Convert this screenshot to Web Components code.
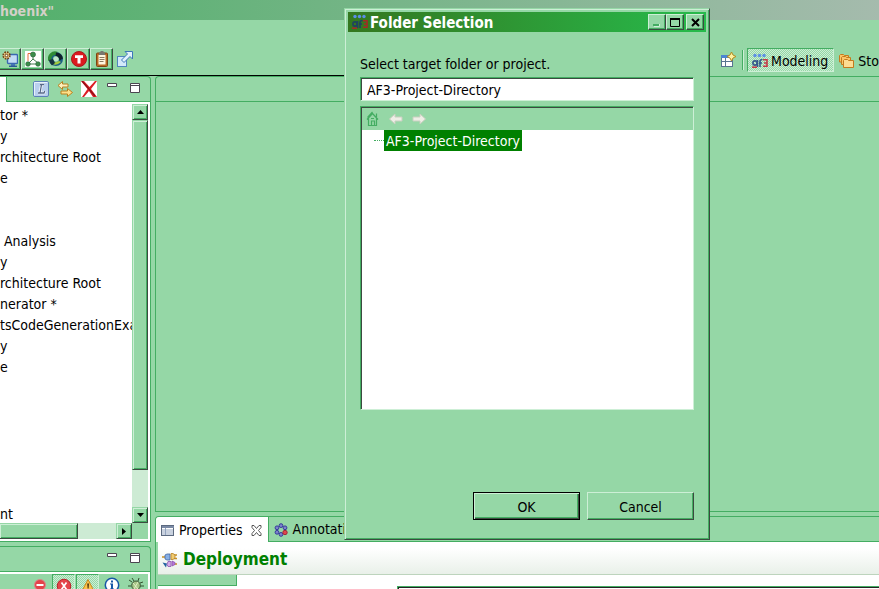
<!DOCTYPE html>
<html lang="en">
<head>
<meta charset="utf-8">
<title>AutoFOCUS 3 Phoenix</title>
<style>
html, body { margin: 0; height: 100%; }
body {
  --face: #95d7a6; --mid: #44ad62; --light: #cdefd6; --dark: #3c4a40; --track: #cdebd4;
  overflow: hidden; background: var(--face); color: #000;
  font: 14px/21px "DejaVu Sans Condensed", "DejaVu Sans", sans-serif;
}
</style>
</head>
<body>
<ide-workbench></ide-workbench>
<script>
const svg = (body, w = 16, h = 16) => `<svg width="${w}" height="${h}" viewBox="0 0 ${w} ${h}" aria-hidden="true">${body}</svg>`;
const people = (dark, red) => `<g fill="#5b8fe6"><circle cx="3" cy="2.5" r="1.7"/><circle cx="7.5" cy="2.5" r="1.7"/><circle cx="12" cy="2.5" r="1.7"/></g>
<g fill="none" stroke-width="1.6"><g stroke="${dark}"><circle cx="3" cy="10" r="2.1"/><path d="M5.500 7v7M8 14V8.500q0-2 2.500-2M7 10h3"/></g><path stroke="${red}" d="M11 6.800h4v6.500h-4M12 10h3"/><path stroke="${red}" d="M0 14.200h5"/></g>`;
const ICONS = {
  deploy: svg(`<rect x="5.500" y="3.500" width="10" height="9" rx="1" fill="#c3dcf5" stroke="#3a68b0" stroke-width="1.400"/><path d="M9 13h4v2H9z" fill="#4777b5"/><path d="M7 15.300h8" stroke="#2c5796" stroke-width="1.400"/><circle cx="4.500" cy="4.500" r="3.300" fill="#f3d58c" stroke="#704214" stroke-width="1.800" stroke-dasharray="1.600 1"/><circle cx="4.500" cy="4.500" r="1.300" fill="#fff" stroke="#704214"/>`),
  tree: svg(`<path fill="#fff" d="M0 0h16v16H0z"/><path d="M8 5v4M8 8 4 12M8 8l5 4M4 13h8" fill="none" stroke="#447c50"/><path d="M6 2.500H3V10" fill="none" stroke="#e66a3a"/><g fill="#3c8c4a" stroke="#25603a" stroke-width=".6"><circle cx="8" cy="3.500" r="2.500"/><circle cx="3" cy="13" r="2.300"/><circle cx="13" cy="13" r="2.300"/></g>`),
  cycle: svg(`<circle cx="8" cy="8" r="5" fill="none" stroke="#1c5f86" stroke-width="4"/><path d="M2 9.500A5.500 5.500 0 0 1 9 2.500" fill="none" stroke="#2f8a35" stroke-width="3.500"/><path d="M8 1.500q6 .5 7 6l-3.500 2Q11 5 7.500 5z" fill="#10202a"/><path d="M4 12.500q4 3 9-1.500l-2-1q-3 2-6 .5z" fill="#a4c93c"/><path d="M1 9l4-1 2 4-3 2.500q-2.500-2-3-5.500z" fill="#16323f"/><circle cx="8" cy="8" r="2.300" fill="#bfe5cb"/>`),
  test: svg(`<circle cx="8" cy="8" r="7.500" fill="#dc1a20" stroke="#a81a1c"/><path d="M4 4.300h8v2.700H9.500v5.500h-3V7H4z" fill="#fff"/>`),
  clip: svg(`<rect x="2.500" y="2" width="11" height="13.500" rx="1" fill="#b96a24" stroke="#7c4514"/><path fill="#fff6df" d="M4.500 4h7v9.500h-7z"/><path fill="#77776f" d="M5 1.500h1.500V0h3v1.500H11V4H5z"/><path d="M5.500 6.500h5M5.500 8.500h5M5.500 10.500h4" stroke="#8a7a60"/>`),
  export: svg(`<rect x=".5" y="5.500" width="9" height="10" fill="#d3e9fa" stroke="#5086bd"/><path d="M8 .5h7.500V8L13 5.500l-6 6L4.500 9l6-6z" fill="#e3f2fd" stroke="#3c78b8"/>`),
  link: svg(`<rect x=".5" y=".5" width="15" height="15" rx="1.500" fill="#b9cfee" stroke="#5c80b8"/><path d="M1.500 14.500v-13h13" fill="none" stroke="#e8f1fb"/><path d="M8.500 3.500 7 12h4l.7-2M5 12h3M7 3.500h4" fill="none" stroke="#fff" stroke-width="2.600"/><path d="M8.500 3.500 7 12h4l.7-2M5 12h3M7 3.500h4" fill="none" stroke="#56688a" stroke-width="1.300"/>`),
  sync: svg(`<path d="M5.500.5 1 4.500l4.500 4V6H11V3H5.500z" fill="#fdf0be" stroke="#b9801f"/><path d="M10.500 7.500V10H4v3h6.500v2.500L15.500 11.500z" fill="#fde08a" stroke="#b9801f"/>`),
  remove: svg(`<path fill="#fff" d="M0 0h16v16H0z"/><path d="M0 0h3l5.500 6L14 0h2L10 8l6 8h-4l-4-6-5 6H1l5.500-8z" fill="#dd1d24"/><path d="M1 0l13 15" stroke="#8d1118" stroke-width="1.200"/>`),
  min: svg(`<path d="M.5.5h9v3h-9z" fill="#fff" stroke="#4b4550"/>`, 10, 10),
  max: svg(`<path d="M.5.5h9v9h-9z" fill="#fff" stroke="#4b4550"/><path d="M1 2.500h8" stroke="#4b4550"/>`, 10, 10),
  perspective: svg(`<rect x="1.500" y="3.500" width="11" height="11" fill="#fff" stroke="#58748f"/><path fill="#4b86d2" d="M1 3h8v3H1z"/><path d="M2 9.500h10M5.500 6v8" stroke="#58748f"/><path d="M11.500 0 13 3l3 1.500L13 6l-1.500 3L10 6 7 4.500 10 3z" fill="#fff2a0" stroke="#b58a1d"/>`),
  af: svg(people("#37588c", "#c43a48")),
  afDark: svg(people("#1f4360", "#a32b25")),
  folders: svg(`<g fill="#fbc568" stroke="#c47a1c"><path d="M.5 9V2.500l1-1h3l1 1h4V9z"/><path d="M2.500 11.500v-7l1-1h3l1 1h4v7z"/><path d="M4.500 14.500v-7l1-1h3l1 1h5v7z" fill="#fddc92"/></g>`),
  table: svg(`<rect x=".5" y=".5" width="12" height="10" fill="#fff" stroke="#5c6a80"/><path fill="#7b8aa5" d="M1 1h12v2H1z"/><path d="M1 5h11M1 7h11M1 9h11M4.500 3v7" stroke="#93a4bf"/>`, 13, 11),
  close: svg(`<path d="M1 .5h2l2.500 3 2.500-3h2v2L7.500 5.500 10 8.500v2H8l-2.500-3-2.500 3H1v-2l2.500-3L1 2.500z" fill="#fff" stroke="#555"/>`, 11, 11),
  ring: svg(`<g fill="#7f82cc" stroke="#343c9a"><circle cx="7" cy="2.600" r="1.900"/><circle cx="11" cy="4.800" r="1.900"/><circle cx="3" cy="4.800" r="1.900"/><circle cx="3" cy="9.300" r="1.900"/><circle cx="7" cy="11.400" r="1.900"/></g><circle cx="11" cy="9.500" r="2.200" fill="#e0454d" stroke="#a02a38"/>`, 14, 14),
  plugs: svg(`<path d="M0 5h4M12 3h3M12 6.500h3M11 12h4" stroke="#c79023" stroke-width="1.400"/><path d="M3 3l2-1h3v6H5L3 7z" fill="#86aee4" stroke="#4167a3" stroke-width=".8"/><path d="M9 1.500h2L13 3v3l-2 1.500H9z" fill="#f0cb70" stroke="#b88224" stroke-width=".8"/><path d="M.5 10.500l4.500 1-1 4z" fill="#2363a0"/><path d="M6 9.500h3v5H6l-1-2z" fill="#d3aae8" stroke="#8b54ad" stroke-width=".8"/><path d="M10 9l3 1.500v2L10 14z" fill="#b97adb" stroke="#8b54ad" stroke-width=".8"/>`),
  stop: svg(`<circle cx="8" cy="8" r="5.500" fill="#e4434a" stroke="#d9868a"/><path d="M4.500 7h7v2h-7z" fill="#fff"/>`),
  error: svg(`<circle cx="8" cy="8" r="6.800" fill="#e4434a" stroke="#b81f28"/><path d="M5.500 4.500l5 7M10.500 4.500l-5 7" stroke="#fff" stroke-width="1.700"/>`),
  warn: svg(`<path d="M8 1.500 15 15H1z" fill="#fcc24c" stroke="#c78a1c"/><path d="M7.200 5.500h1.800l-.4 5H7.600zM7.200 11.500H9v1.800H7.200z" fill="#4e3510"/>`),
  info: svg(`<circle cx="8" cy="8" r="6.700" fill="#fff" stroke="#1757a6" stroke-width="1.500"/><path d="M7 3.500h2v2H7zM6 6.500h3v5h1v1H6v-1h1v-4H6z" fill="#1757a6"/>`),
  bug: svg(`<path d="M4 5 1 3M6 4 4 1M10 4l1-3M12 6l3-1M3 9H0M12 9h4M4 12l-2 3M11 12l3 3" stroke="#34502e"/><ellipse cx="8" cy="8.500" rx="4.300" ry="4.500" fill="#a7c688" stroke="#34502e"/><path d="M5 6l5 6M10 5l-4 7" stroke="#e4efc8"/>`),
  home: svg(`<path d="M1 8.500 6.500 2.500 12 8.500M2.500 7.500v7h8v-7M10.500 6V2.500M1.500 6.500 6.500 1M5.500 14v-4h3v4M5 7.500h3" fill="none" stroke="#44ad62" stroke-width="1.200"/>`, 14, 16),
  back: svg(`<path d="M.5 6 6 1v3h7v4H6v3z" fill="#eeeee6" stroke="#c9cfc0"/>`, 14, 12),
  next: svg(`<path d="M13.500 6 8 1v3H1v4h7v3z" fill="#eeeee6" stroke="#c9cfc0"/>`, 14, 12),
  winMin: svg(`<path d="M1 7h6v2H1z" fill="#44ad62"/><path d="M2 9.500h5.500V7" fill="none" stroke="#cdefd6"/>`, 11, 10),
  winMax: svg(`<path d="M.5.500h9v8h-9z" fill="none" stroke="#000"/><path d="M0 1h10" stroke="#000" stroke-width="2"/>`, 10, 9),
  winClose: svg(`<path d="M1 1l7 7M8 1 1 8" stroke="#000" stroke-width="2"/>`, 9, 9),
  up: svg(`<path d="M0 4h7L3.500 0z"/>`, 7, 4),
  down: svg(`<path d="M0 0h7L3.500 4z"/>`, 7, 4),
  right: svg(`<path d="M0 0v7l4-3.500z"/>`, 4, 7)
};

const BASE = `*, *::before { box-sizing: border-box; } :host { display: block; min-width: 0; } svg { display: block; flex: none; }
button { font: inherit; color: inherit; margin: 0; padding: 0; border: 0; background: none; }`;

function define(name, css, html) {
  const template = document.createElement("template");
  customElements.define(name, class extends HTMLElement {
    connectedCallback() {
      if (this.shadowRoot) return;
      template.innerHTML = `<style>${BASE}${css}</style>${typeof html === "function" ? html(this) : html}`;
      this.attachShadow({ mode: "open" }).append(template.content.cloneNode(true));
    }
  });
}

define("tool-button", `
:host { flex: none; }
button { display: flex; align-items: center; justify-content: center; width: 23px; height: 22px; }
:host([look=raised]) button { border: 1px solid; border-color: var(--light) var(--dark) var(--dark) var(--light); box-shadow: inset -1px -1px var(--mid); }
:host([look=pressed]) button { height: 24px; border: 1px solid; border-color: var(--mid) var(--light) var(--light) var(--mid);
  background: repeating-conic-gradient(var(--light) 0 25%, var(--face) 0 50%) 0 0 / 2px 2px; }
:host([look=small]) button { width: auto; height: auto; }
`, el => `<button type="button" aria-label="${el.getAttribute("label")}">${ICONS[el.getAttribute("icon")]}</button>`);

define("scroll-bar", `
:host { display: flex; background: var(--track); }
:host([axis=y]) { flex-direction: column; width: 16px; }
:host([axis=x]) { height: 16px; }
.part { border: 1px solid; border-color: var(--face) var(--dark) var(--dark) var(--face); background: var(--face); box-shadow: inset 1px 1px var(--light), inset -1px -1px var(--mid); }
button.part { display: flex; align-items: center; justify-content: center; width: 16px; height: 16px; flex: none; }
.gap { flex: 1; }
:host([axis=y]) .thumb { flex: 9.500; }
:host([axis=x]) .thumb { flex: 2; border-left: 0; }
`, el => el.getAttribute("axis") === "y"
  ? `<button class="part" type="button" aria-label="Scroll up">${ICONS.up}</button><div class="part thumb"></div><div class="gap"></div><button class="part" type="button" aria-label="Scroll down">${ICONS.down}</button>`
  : `<div class="part thumb"></div><div class="gap"></div><button class="part" type="button" aria-label="Scroll right">${ICONS.right}</button>`);

define("view-panel", `
:host { display: flex; flex-direction: column; border: 1px solid var(--mid); min-height: 0; }
:host([side=left]) { border-left: 0; border-top-right-radius: 4px; }
:host([side=right]) { border-right: 0; border-top-left-radius: 4px; }
header { display: flex; height: 25px; flex: none; border-bottom: 1px solid var(--mid); }
main { flex: 1; min-height: 0; display: flex; flex-direction: column; }
`, `<header><slot name="head"></slot></header><main><slot></slot></main>`);

define("view-tab", `
:host { display: flex; align-items: center; gap: 5px; padding: 1px 6px 0 5px; white-space: nowrap; }
:host([active]) { background: #fff; border-right: 1px solid var(--mid); border-top-left-radius: 3px; margin-bottom: -1px; }
button { margin-left: 3px; }
`, el => `${ICONS[el.getAttribute("icon")]}<span><slot></slot></span>${el.hasAttribute("active") ? `<button type="button" aria-label="Close">${ICONS.close}</button>` : ""}`);

define("model-tree", `
:host { display: grid; grid-template: minmax(0, 1fr) 16px / minmax(0, 1fr) 16px; flex: 1; min-height: 0; background: #fff; border: 2px solid #fff; border-left: 0; }
ul { margin: 0; padding: 1px 0 0; list-style: none; overflow: hidden; white-space: pre; }
li { height: 21px; }
.corner { background: var(--face); }
`, () => {
  const rows = ["tor *", "y", "rchitecture Root", "e", "", "", " Analysis", "y", "rchitecture Root", "nerator *", "tsCodeGenerationExa", "y", "e", "", "", "", "", "", "", "nt"];
  return `<ul>${rows.map(r => `<li>${r}</li>`).join("")}</ul><scroll-bar axis="y"></scroll-bar><scroll-bar axis="x"></scroll-bar><div class="corner"></div>`;
});

define("main-toolbar", `
:host { display: flex; align-items: flex-start; height: 56px; padding-top: 28px; }
.tools { display: flex; flex: 1; align-self: stretch; margin: 0 10px 0 -2px; border-bottom: 1px solid #000; }
.perspectives { display: flex; align-items: center; height: 24px; }
.sep { width: 2px; height: 20px; margin: 0 3px 0 6px; background: linear-gradient(90deg, var(--mid) 50%, var(--light) 50%); }
button { display: flex; align-items: center; gap: 3px; height: 24px; padding: 2px 5px 0 4px; white-space: nowrap; border: 1px solid transparent; }
button.on { border-color: var(--mid) var(--light) var(--light) var(--mid); background: repeating-conic-gradient(var(--light) 0 25%, var(--face) 0 50%) 0 0 / 2px 2px; }
button:last-child { padding-right: 0; border-right: 0; }
`, `<div class="tools">
<tool-button look="raised" icon="deploy" label="Deploy"></tool-button><tool-button look="raised" icon="tree" label="Structure"></tool-button><tool-button look="raised" icon="cycle" label="Simulate"></tool-button><tool-button look="raised" icon="test" label="Test"></tool-button><tool-button look="raised" icon="clip" label="Clipboard"></tool-button><tool-button icon="export" label="Export"></tool-button></div>
<div class="perspectives"><tool-button look="small" icon="perspective" label="Open perspective"></tool-button><span class="sep"></span>
<button type="button" class="on">${ICONS.af}<span>Modeling</span></button><button type="button">${ICONS.folders}<span>Sto</span></button></div>`);

define("deployment-editor", `
:host { flex: 1; background: #fff; margin-left: 2px; }
h2 { display: flex; align-items: center; gap: 5px; height: 33px; margin: 0; padding: 3px 4px 0; border-bottom: 1px solid #bdd4bd;
  background: linear-gradient(#fff 20%, #e9f0e9); font: bold 17px/21px "DejaVu Sans Condensed", sans-serif; color: #008000; }
.row { display: flex; align-items: flex-start; }
.tab { width: 79px; height: 11px; background: var(--face); border: solid var(--mid); border-width: 0 1px 1px 0; }
.box { flex: 1; height: 12px; margin: 11px 0 0 160px; border: solid var(--mid); border-width: 1px 0 0 1px; box-shadow: inset 1px 1px #222; }
`, `<h2>${ICONS.plugs}<span>Deployment</span></h2><div class="row"><div class="tab"></div><div class="box"></div></div>`);

define("folder-dialog", `
:host { position: absolute; left: 344px; top: 8px; width: 366px; background: var(--face);
  border: 1px solid; border-color: var(--face) var(--dark) var(--dark) var(--face); box-shadow: inset 1px 1px var(--light), inset -1px -1px var(--mid); padding: 3px 3px 19px; }
.title { display: flex; align-items: center; gap: 2px; height: 20px; padding: 0 2px 0 4px; background: linear-gradient(90deg, #34771f, #27bb4c); color: #fff; }
h1 { flex: 1; margin: 0; padding-top: 1px; font: bold 15px/20px "DejaVu Sans Condensed", sans-serif; }
.win { display: flex; }
.win button { display: flex; align-items: center; justify-content: center; width: 18px; height: 16px; background: var(--face); border: 1px solid; border-color: var(--light) var(--dark) var(--dark) var(--light); box-shadow: inset -1px -1px var(--mid); }
.win button:last-child { margin-left: 2px; }
form { padding: 22px 12px 0; }
label { display: block; }
.sunken { border: 1px solid; border-color: var(--mid) var(--light) var(--light) var(--mid); box-shadow: inset 1px 1px var(--dark); background: #fff; }
input { display: block; width: 100%; height: 24px; margin-top: 2px; padding: 2px 6px 0; font: inherit; color: inherit; border-radius: 0; outline: 0; }
.tree { height: 304px; margin-top: 5px; padding: 1px 0 0 1px; }
nav { display: flex; align-items: center; gap: 9px; height: 22px; padding-left: 4px; background: var(--face); }
.node { display: flex; align-items: center; padding-left: 12px; }
.node::before { content: ""; width: 10px; border-top: 1px dotted var(--mid); }
.node span { background: #008000; color: #fff; padding: 1px 2px 0; line-height: 20px; }
.actions { display: flex; justify-content: flex-end; gap: 7px; margin-top: 82px; }
.actions button { width: 107px; height: 28px; padding-top: 2px; border: 1px solid; border-color: var(--light) var(--dark) var(--dark) var(--light); box-shadow: inset -1px -1px var(--mid); }
.actions .ok { border-color: #000; box-shadow: inset 1px 1px var(--light), inset -1px -1px var(--dark), inset -2px -2px var(--mid); }
`, `<div class="title">${ICONS.afDark}<h1>Folder Selection</h1><div class="win"><button type="button" aria-label="Minimize">${ICONS.winMin}</button><button type="button" aria-label="Maximize">${ICONS.winMax}</button><button type="button" aria-label="Close">${ICONS.winClose}</button></div></div>
<form><label for="target">Select target folder or project.</label><input id="target" class="sunken" type="text" value="AF3-Project-Directory">
<div class="tree sunken"><nav><tool-button look="small" icon="home" label="Home"></tool-button><tool-button look="small" icon="back" label="Back"></tool-button><tool-button look="small" icon="next" label="Forward"></tool-button></nav><div class="node"><span>AF3-Project-Directory</span></div></div>
<div class="actions"><button type="button" class="ok">OK</button><button type="button">Cancel</button></div></form>`);

define("ide-workbench", `
:host { display: flex; flex-direction: column; height: 100vh; overflow: hidden; }
.title { height: 20px; flex: none; background: linear-gradient(90deg, #52b06b, #a5bbad); color: #d4d0c8; font: bold 14px/22px "DejaVu Sans Condensed", sans-serif; }
main-toolbar { flex: none; }
.work { flex: 1; min-height: 0; display: grid; grid-template-columns: 151px minmax(0, 1fr); gap: 4px; }
.col { display: flex; flex-direction: column; gap: 4px; min-width: 0; min-height: 0; }
.grow { flex: 1; }
.lower { height: 43px; flex: none; border-bottom: 0; }
.views { height: 73px; flex: none; border-bottom: 0; }
.first { width: 7px; background: #fff; border-right: 1px solid var(--mid); margin-bottom: -1px; }
.icons { display: flex; align-items: center; gap: 8px; margin-left: auto; padding-right: 10px; }
.icons .ctl { align-self: flex-start; padding-top: 6px; }
.icons .ctl[icon=min] { margin-left: 2px; }
.icons .ctl[icon=max] { margin-left: 5px; }
.filters { display: flex; justify-content: flex-end; gap: 1px; padding-right: 1px; border-top: 2px solid #fff; border-right: 2px solid #fff; }
`, `<div class="title">hoenix"</div><main-toolbar></main-toolbar>
<div class="work"><div class="col">
<view-panel class="grow" side="left"><div slot="head" class="first"></div><div slot="head" class="icons"><tool-button look="small" icon="link" label="Link"></tool-button><tool-button look="small" icon="sync" label="Synchronize"></tool-button><tool-button look="small" icon="remove" label="Delete"></tool-button><tool-button class="ctl" look="small" icon="min" label="Minimize"></tool-button><tool-button class="ctl" look="small" icon="max" label="Maximize"></tool-button></div><model-tree></model-tree></view-panel>
<view-panel class="lower" side="left"><div slot="head" class="icons"><tool-button class="ctl" look="small" icon="min" label="Minimize"></tool-button><tool-button class="ctl" look="small" icon="max" label="Maximize"></tool-button></div>
<div class="filters"><tool-button icon="stop" label="Stop"></tool-button><tool-button look="pressed" icon="error" label="Errors"></tool-button><tool-button look="pressed" icon="warn" label="Warnings"></tool-button><tool-button icon="info" label="Information"></tool-button><tool-button icon="bug" label="Debug"></tool-button></div></view-panel>
</div><div class="col">
<view-panel class="grow" side="right"></view-panel>
<view-panel class="views" side="right"><view-tab slot="head" active icon="table">Properties</view-tab><view-tab slot="head" icon="ring">Annotations</view-tab><deployment-editor></deployment-editor></view-panel>
</div></div><folder-dialog></folder-dialog>`);
</script>
</body>
</html>
